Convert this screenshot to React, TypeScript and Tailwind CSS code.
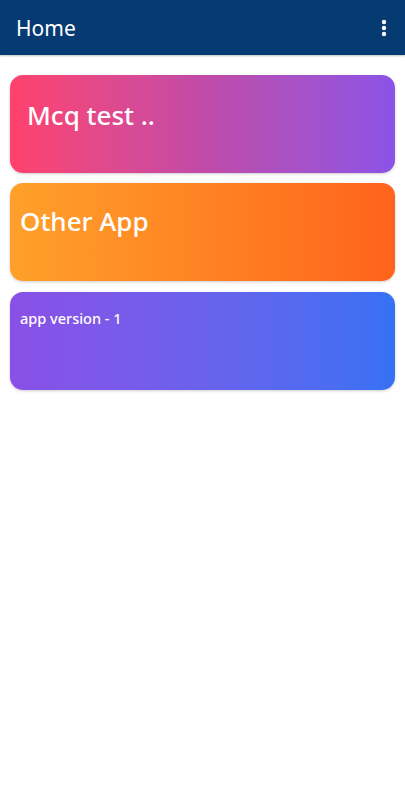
export default function App() {
  return (
    <div className="min-h-[800px] bg-white" style={{ fontFamily: '"Noto Sans", "Open Sans", sans-serif' }}>
      <header className="h-[55px] bg-[#063a72] flex items-center justify-between pl-4 pr-[18px] shadow-[0_1px_2px_rgba(0,0,0,0.25)]">
        <h1 className="text-white text-[21px] leading-none pt-[2px]">Home</h1>
        <svg width="6" height="18" viewBox="0 0 6 18" fill="white">
          <circle cx="3" cy="3" r="2.2" />
          <circle cx="3" cy="9" r="2.2" />
          <circle cx="3" cy="15" r="2.2" />
        </svg>
      </header>

      <main className="px-[10px] pt-5 flex flex-col gap-[10px]">
        <div className="h-[98px] rounded-[13px] bg-gradient-to-r from-[#ff416c] via-[#c24aa8] to-[#8b52e6] shadow-[0_1px_3px_rgba(0,0,0,0.2)] pl-[17px] pt-[22px]">
          <p className="text-white text-[26px] font-medium leading-[36px]">Mcq test ..</p>
        </div>
        <div className="h-[98px] rounded-[13px] bg-gradient-to-r from-[#ffa02a] to-[#ff621c] shadow-[0_1px_3px_rgba(0,0,0,0.2)] pl-[10px] pt-[20px]">
          <p className="text-white text-[26px] font-medium leading-[36px]">Other App</p>
        </div>
        <div className="h-[98px] mt-px rounded-[13px] bg-gradient-to-r from-[#8a4fe6] to-[#3571f3] shadow-[0_1px_3px_rgba(0,0,0,0.2)] pl-[10px] pt-[16px]">
          <p className="text-white text-[14.5px] font-medium leading-[20px]">app version - 1</p>
        </div>
      </main>
    </div>
  );
}
